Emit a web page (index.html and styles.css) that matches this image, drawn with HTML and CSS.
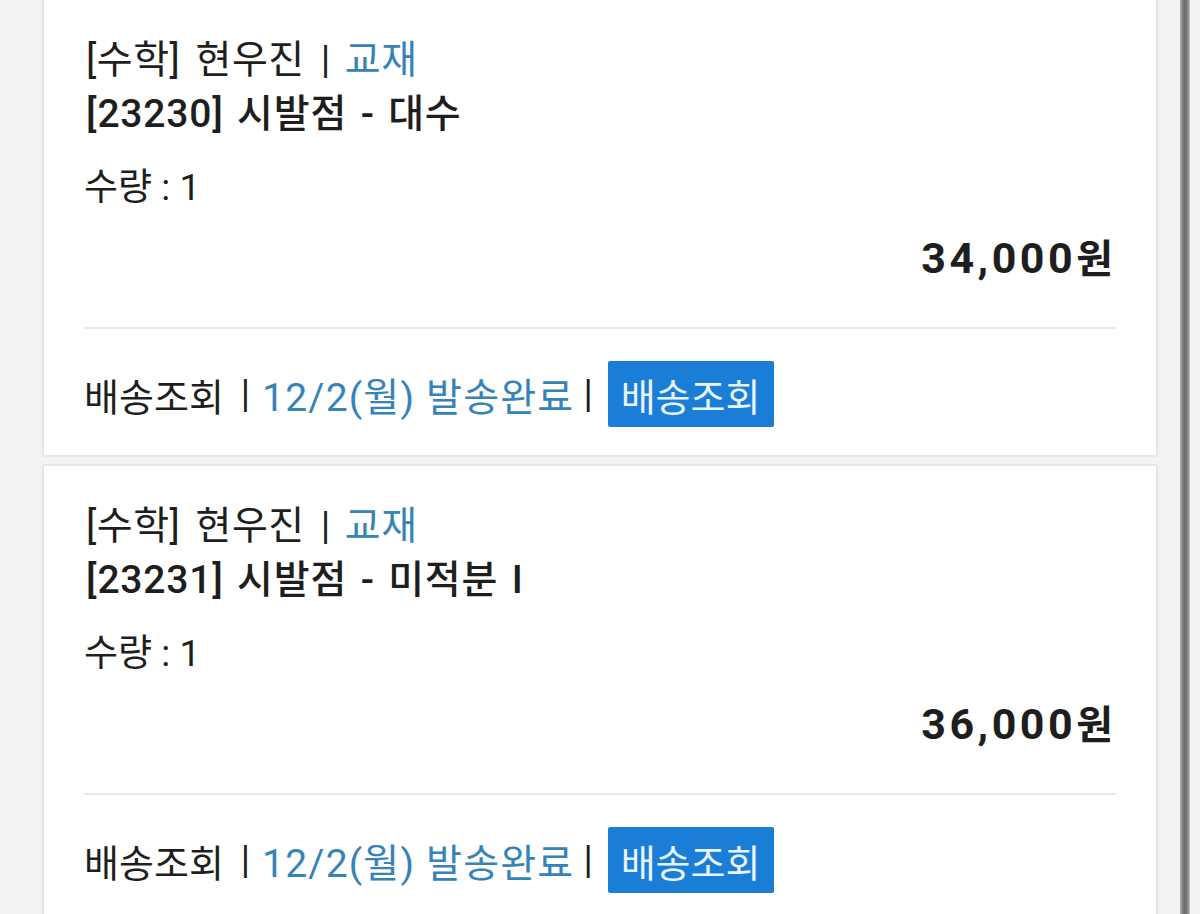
FILE: index.html
```html
<!DOCTYPE html>
<html lang="ko">
<head>
<meta charset="utf-8">
<link rel="stylesheet" href="styles.css">
</head>
<body>
<div class="list">
  <div class="card first">
    <div class="meta">[수학] 현우진<span class="sep">|</span><span class="blue">교재</span></div>
    <div class="title">[23230] 시발점 - 대수</div>
    <div class="qty">수량 : 1</div>
    <div class="price"><span class="num">34,000</span>원</div>
    <div class="divider"></div>
    <div class="footer">
      <span>배송조회</span><span class="sep">|</span><span class="blue date">12/2(월) 발송완료</span><span class="sep sep-end">|</span><span class="btn">배송조회</span>
    </div>
  </div>
  <div class="card">
    <div class="meta">[수학] 현우진<span class="sep">|</span><span class="blue">교재</span></div>
    <div class="title">[23231] 시발점 - 미적분 I</div>
    <div class="qty">수량 : 1</div>
    <div class="price"><span class="num">36,000</span>원</div>
    <div class="divider"></div>
    <div class="footer">
      <span>배송조회</span><span class="sep">|</span><span class="blue date">12/2(월) 발송완료</span><span class="sep sep-end">|</span><span class="btn">배송조회</span>
    </div>
  </div>
</div>
<div class="scrollbar"></div>
</body>
</html>
```

FILE: styles.css
```css
html, body {
  margin: 0;
  padding: 0;
  background: #f3f3f5;
  height: 914px;
  overflow: hidden;
}
body {
  font-family: "Roboto", "Noto Sans CJK KR", sans-serif;
  color: #1e1e1e;
}
.list {
  width: 1116px;
  margin-left: 42px;
  display: flex;
  flex-direction: column;
  gap: 7px;
}
.card {
  background: #fff;
  border: 2px solid #e6e6e9;
  border-radius: 2px;
  padding: 33px 40px 27px 40px;
}
.card.first {
  margin-top: -2px;
}
.meta {
  font-size: 39px;
  line-height: 54px;
  padding-left: 2px;
  word-spacing: 5px;
  letter-spacing: 0.5px;
}
.title {
  font-size: 39px;
  line-height: 54px;
  font-weight: 500;
  padding-left: 2px;
  letter-spacing: 0.8px;
  word-spacing: 3px;
}
.sep {
  color: #1e1e1e;
  margin: 0 14px 0 16px;
}
.blue {
  color: #3683b8;
}
.qty {
  margin-top: 20px;
  font-size: 37px;
  line-height: 54px;
}
.price {
  margin-top: 16px;
  font-size: 40px;
  line-height: 54px;
  font-weight: 700;
  text-align: right;
  padding-right: 3px;
}
.price .num {
  font-weight: 700;
  font-size: 43px;
  letter-spacing: 3.5px;
}
.divider {
  margin-top: 40px;
  height: 2px;
  background: #e8e8ea;
}
.footer {
  margin-top: 31px;
  height: 68px;
  display: flex;
  align-items: center;
  font-size: 38px;
}
.footer .sep {
  margin: 0 12px 0 17px;
}
.footer .sep-end {
  margin: 0 15px 0 9px;
}
.date {
  font-size: 39px;
  letter-spacing: 1.2px;
}
.btn {
  display: flex;
  align-items: center;
  height: 66px;
  padding: 0 13px;
  background: #1b7ed6;
  color: #e8f4ff;
  border-radius: 2px;
}
.scrollbar {
  position: fixed;
  top: 0;
  left: 1180px;
  width: 10px;
  height: 914px;
  background: linear-gradient(to right, #b5b5b7 0, #8a8a8c 2px, #707072 4px, #707072 6px, #8a8a8c 8px, #c5c5c7 10px);
}
```
